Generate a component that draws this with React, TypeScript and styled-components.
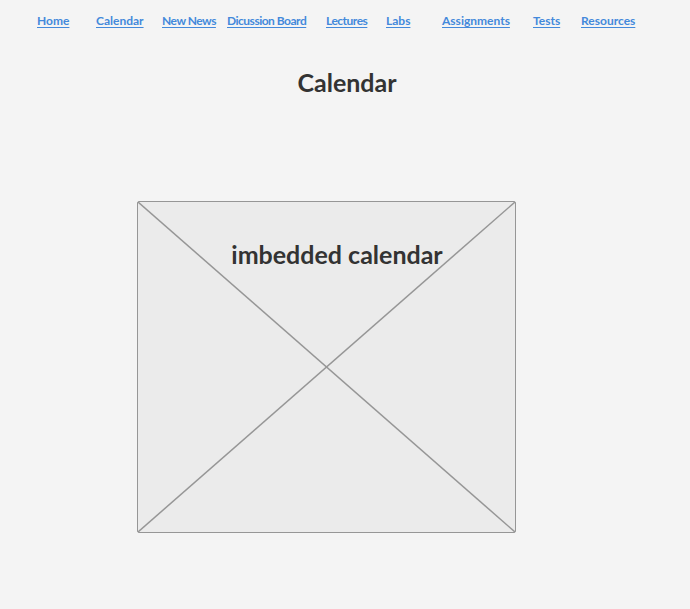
import React from "react";
import styled, { createGlobalStyle } from "styled-components";

const Global = createGlobalStyle`
  html, body { margin: 0; padding: 0; background: #f4f4f4; }
  body { font-family: Lato, "Open Sans", sans-serif; color: #333; }
`;

const Page = styled.div`
  width: 690px;
  height: 609px;
  background: #f4f4f4;
  display: flex;
  flex-direction: column;
`;

const Nav = styled.nav`
  display: flex;
  padding: 12px 0 0 37px;
  height: 17px;
`;

const NavLink = styled.a<{ $w?: number; $tight?: boolean }>`
  flex: 0 0 ${(p) => (p.$w ? `${p.$w}px` : "auto")};
  font-size: 12px;
  font-weight: 700;
  line-height: 17px;
  letter-spacing: ${(p) => (p.$tight ? "-0.5px" : "0")};
  color: #4389db;
  text-decoration: underline;
  text-underline-offset: 2px;
  white-space: nowrap;
`;

const Title = styled.h1`
  margin: 38px 0 0 0;
  text-align: center;
  font-size: 25px;
  font-weight: 700;
  line-height: 30px;
  color: #333;
  padding-left: 4px;
`;

const Placeholder = styled.div`
  position: relative;
  margin: 104px 0 0 137px;
  width: 377px;
  height: 330px;
  border: 1.5px solid #969696;
  border-radius: 2px;
  background: #ebebeb;
`;

const Lines = styled.svg`
  position: absolute;
  inset: 0;
  width: 100%;
  height: 100%;
`;

const Label = styled.div`
  position: relative;
  padding: 37px 0 0 21px;
  text-align: center;
  font-size: 25px;
  font-weight: 700;
  line-height: 30px;
  color: #333;
`;

const links: [string, number | undefined, boolean][] = [
  ["Home", 59, false],
  ["Calendar", 66, false],
  ["New News", 65, true],
  ["Dicussion Board", 99, true],
  ["Lectures", 60, true],
  ["Labs", 56, false],
  ["Assignments", 91, false],
  ["Tests", 48, false],
  ["Resources", undefined, false],
];

export default function App() {
  return (
    <Page>
      <Global />
      <Nav>
        {links.map(([t, w, tight]) => (
          <NavLink key={t} href="#" $w={w} $tight={tight}>
            {t}
          </NavLink>
        ))}
      </Nav>
      <Title>Calendar</Title>
      <Placeholder>
        <Lines viewBox="0 0 377 330" preserveAspectRatio="none">
          <line x1="0" y1="0" x2="377" y2="330" stroke="#969696" strokeWidth="1.5" />
          <line x1="377" y1="0" x2="0" y2="330" stroke="#969696" strokeWidth="1.5" />
        </Lines>
        <Label>imbedded calendar</Label>
      </Placeholder>
    </Page>
  );
}
